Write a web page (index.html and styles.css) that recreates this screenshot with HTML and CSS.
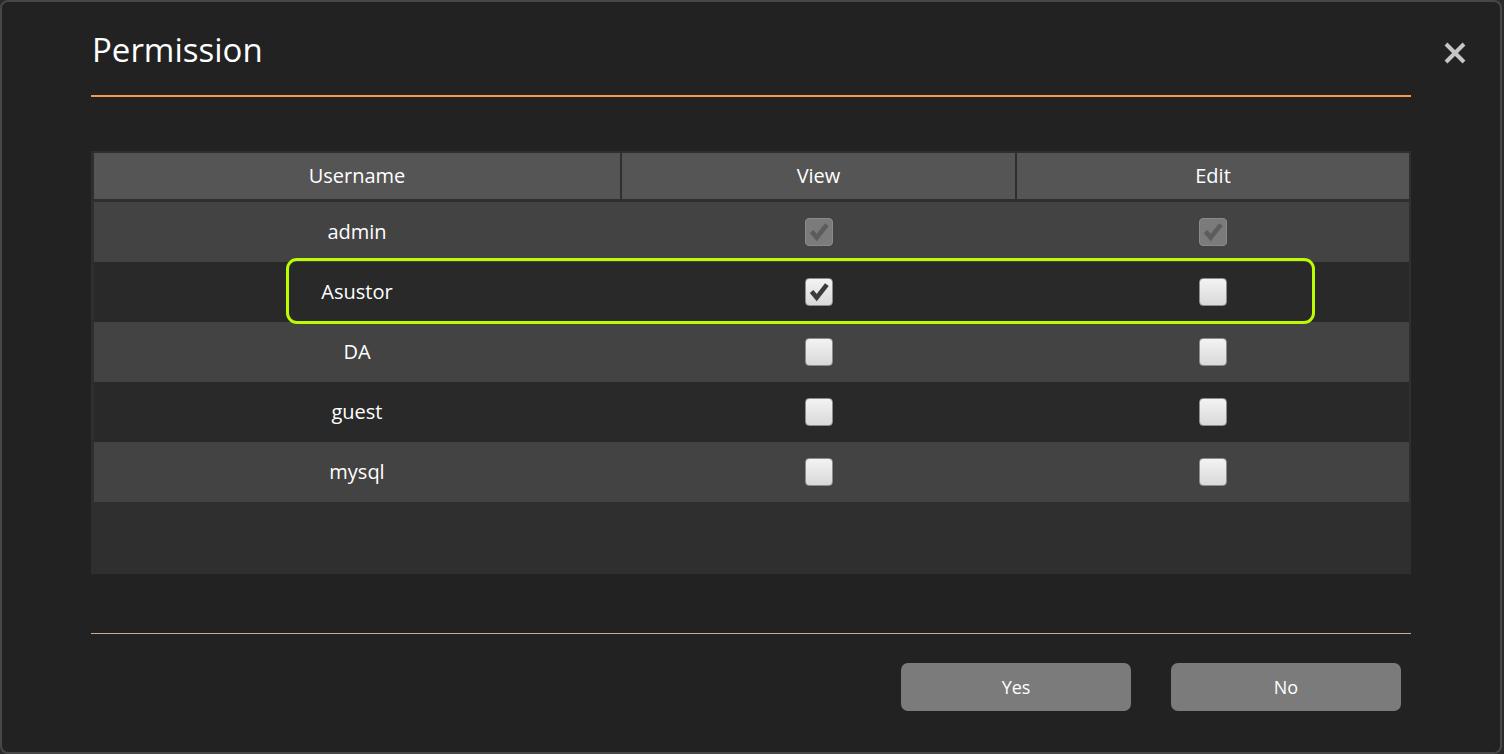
FILE: index.html
```html
<!DOCTYPE html>
<html lang="en">
<head>
<meta charset="utf-8">
<title>Permission</title>
<link rel="stylesheet" href="styles.css">
</head>
<body>
<div class="dialog">
  <div class="dlg-head">
    <h1 class="title">Permission</h1>
  </div>
  <button class="close" aria-label="Close">
    <svg width="22" height="22" viewBox="0 0 22 22"><path d="M2 2 L20 20 M20 2 L2 20" stroke="#c6c6c6" stroke-width="4" stroke-linecap="butt" fill="none"/></svg>
  </button>

  <div class="grid">
    <div class="thead">
      <div class="th">Username</div>
      <div class="th">View</div>
      <div class="th">Edit</div>
    </div>

    <div class="row odd">
      <div class="cell">admin</div>
      <div class="cell"><span class="cb disabled"><svg viewBox="0 0 28 28"><path d="M6 13.5 L11.5 20 L22.5 6"/></svg></span></div>
      <div class="cell"><span class="cb disabled"><svg viewBox="0 0 28 28"><path d="M6 13.5 L11.5 20 L22.5 6"/></svg></span></div>
    </div>

    <div class="row even">
      <div class="cell">Asustor</div>
      <div class="cell"><span class="cb"><svg viewBox="0 0 28 28"><path d="M6 13.5 L11.5 20 L22.5 6"/></svg></span></div>
      <div class="cell"><span class="cb"></span></div>
      <div class="highlight"></div>
    </div>

    <div class="row odd">
      <div class="cell">DA</div>
      <div class="cell"><span class="cb"></span></div>
      <div class="cell"><span class="cb"></span></div>
    </div>

    <div class="row even">
      <div class="cell">guest</div>
      <div class="cell"><span class="cb"></span></div>
      <div class="cell"><span class="cb"></span></div>
    </div>

    <div class="row odd">
      <div class="cell">mysql</div>
      <div class="cell"><span class="cb"></span></div>
      <div class="cell"><span class="cb"></span></div>
    </div>
  </div>

  <div class="footer">
    <button class="btn">Yes</button>
    <button class="btn">No</button>
  </div>
</div>
</body>
</html>
```
FILE: styles.css
```css
* { box-sizing: border-box; }

html, body {
  margin: 0;
  padding: 0;
  background: #2a2a2a;
}

body {
  font-family: "Open Sans", "Noto Sans", sans-serif;
  color: #ffffff;
}

.dialog {
  position: relative;
  width: 1502px;
  height: 754px;
  border: 2px solid #474747;
  border-radius: 8px;
  background: #222222;
  padding: 0 89px;
}

.dlg-head {
  padding: 26px 0 23px 1px;
  border-bottom: 2px solid #f39a52;
}

.title {
  margin: 0;
  font-size: 33px;
  line-height: 44px;
  font-weight: 400;
  color: #ffffff;
}

.close {
  position: absolute;
  top: 40px;
  right: 34px;
  width: 22px;
  height: 22px;
  padding: 0;
  border: 0;
  background: transparent;
  cursor: pointer;
}
.close svg { display: block; }

.grid {
  margin-top: 54px;
  height: 423px;
  background: #2f2f2f;
  padding: 2px 2px 0 3px;
}

.thead {
  display: grid;
  grid-template-columns: 526px 393px 392px;
  gap: 2px;
  margin-bottom: 3px;
}

.th {
  background: #555555;
  height: 46px;
  line-height: 46px;
  text-align: center;
  font-size: 20px;
}

.row {
  position: relative;
  display: grid;
  grid-template-columns: 526px 393px 392px;
  gap: 2px;
  height: 60px;
}
.row.odd { background: #434343; }
.row.even { background: #292929; z-index: 1; }

.cell {
  display: flex;
  align-items: center;
  justify-content: center;
  font-size: 20px;
  line-height: 60px;
}

.cb {
  display: block;
  width: 28px;
  height: 28px;
  border: 1px solid #8d8d8d;
  border-radius: 4px;
  background: linear-gradient(#f3f3f3, #d9d9d9);
}
.cb svg {
  display: block;
  width: 26px;
  height: 26px;
}
.cb svg path {
  fill: none;
  stroke: #3b3b3b;
  stroke-width: 5;
  stroke-linejoin: miter;
}
.cb.disabled {
  background: #7b7b7b;
  border-color: #8a8a8a;
}
.cb.disabled svg path { stroke: #5c5c5c; }

.highlight {
  position: absolute;
  z-index: 2;
  left: 192px;
  top: -4px;
  width: 1029px;
  height: 66px;
  border: 3px solid #bcfc00;
  border-radius: 11px;
  pointer-events: none;
}

.footer {
  margin-top: 59px;
  border-top: 1px solid #d4a983;
  padding: 29px 10px 0 0;
  display: flex;
  justify-content: flex-end;
  gap: 40px;
}

.btn {
  width: 230px;
  height: 48px;
  border: 0;
  border-radius: 7px;
  background: #7b7b7b;
  color: #ffffff;
  font-family: "Open Sans", "Noto Sans", sans-serif;
  font-size: 18px;
  line-height: 48px;
  padding: 0;
}
```
